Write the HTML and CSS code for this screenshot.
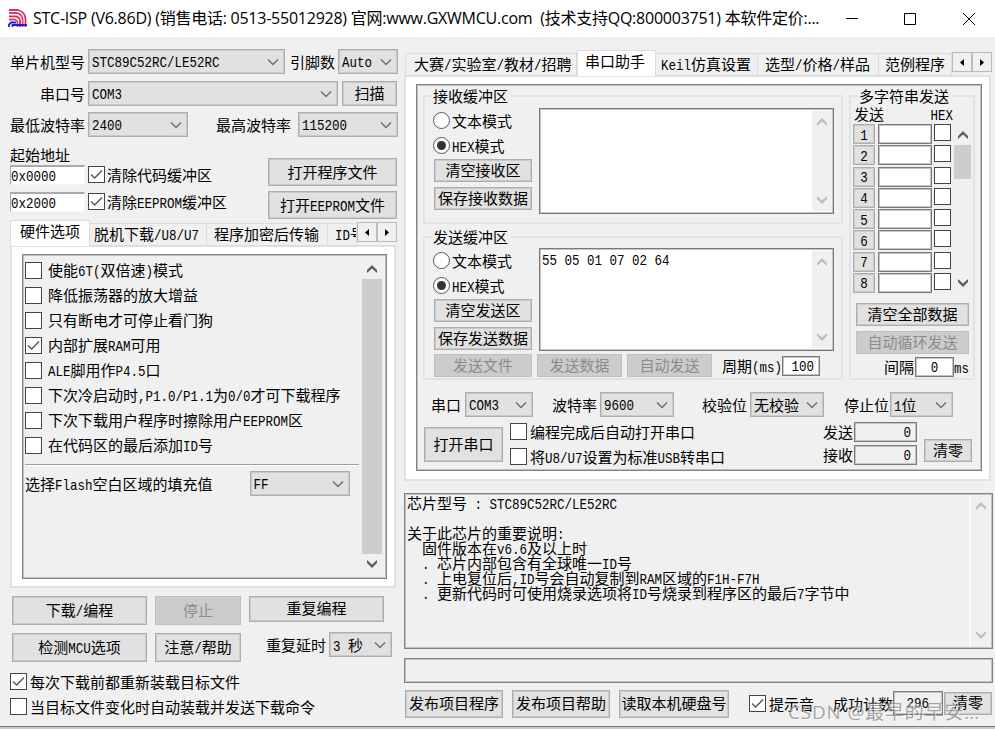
FILE: index.html
```html
<!DOCTYPE html>
<html lang="zh-CN">
<head>
    <meta charset="UTF-8">
    <meta name="viewport" content="width=device-width, initial-scale=1.0">
    <title>STC-ISP (V6.86D)</title>
    <link rel="stylesheet" href="styles.css">
</head>
<body>
    <svg class="sprite">
        <symbol id="down" viewBox="0 0 12 8"><path d="M1 1.5L6 6.5L11 1.5" fill="none" stroke="currentColor" stroke-width="1.5"/></symbol>
        <symbol id="sb-up" viewBox="0 0 10 8"><path d="M0 5L5 0L10 5V8L5 3.4L0 8Z" fill="currentColor"/></symbol>
        <symbol id="sb-down" viewBox="0 0 10 8"><path d="M0 3L5 8L10 3V0L5 4.6L0 0Z" fill="currentColor"/></symbol>
        <symbol id="tick" viewBox="0 0 13 13"><path d="M1 6.5L4.7 10L12 2.6" fill="none" stroke="#555" stroke-width="1.4"/></symbol>
        <symbol id="tri-left" viewBox="0 0 4 7"><path d="M4 0V7L0 3.5Z"/></symbol>
        <symbol id="tri-right" viewBox="0 0 4 7"><path d="M0 0V7L4 3.5Z"/></symbol>
    </svg>
    <div class="window">
        <div class="titlebar">
            <svg class="logo" viewBox="0 0 20 19" fill="none" stroke-width="1.8">
                <path d="M1 1H10Q17 3 17.5 10V18" stroke="#d8325f"/>
                <path d="M1 4H9Q14 5 14.7 11V18" stroke="#e0446c"/>
                <path d="M1 7.3H8Q11.500 8 12 12V18" stroke="#c62d58"/>
                <path d="M1 10.500H7Q9 11 9.500 14V18" stroke="#e0446c"/>
                <path d="M1 18V15.500L3 13.500H8M4.500 18V16H19" stroke="#1522d8"/>
            </svg>
            <div class="title">STC-ISP (V6.86D) (销售电话: 0513-55012928) 官网:www.GXWMCU.com&nbsp; (技术支持QQ:800003751) 本软件定价:...</div>
            <svg class="win-buttons" viewBox="0 0 130 14" fill="none" stroke="#000">
                <path d="M0 6.500H12M58.500 1.500H69.500V12.500H58.500ZM117 1L129 13M129 1L117 13"/>
            </svg>
        </div>
        <div class="main">
            <div class="left">
                <div class="row chip-row">
                    <span class="label wide">单片机型号</span>
                    <div class="select chip"><span class="en">STC89C52RC/LE52RC</span><svg><use href="#down"/></svg></div>
                    <span class="label pins-label">引脚数</span>
                    <div class="select pins"><span class="en">Auto</span><svg><use href="#down"/></svg></div>
                </div>
                <div class="row port-row">
                    <span class="label wide">串口号</span>
                    <div class="select port"><span class="en">COM3</span><svg><use href="#down"/></svg></div>
                    <button class="btn scan">扫描</button>
                </div>
                <div class="row baud-row">
                    <span class="label wide">最低波特率</span>
                    <div class="select baud"><span class="en">2400</span><svg><use href="#down"/></svg></div>
                    <span class="label max-label">最高波特率</span>
                    <div class="select baud"><span class="en">115200</span><svg><use href="#down"/></svg></div>
                </div>
                <div class="address">
                    <div class="address-fields">
                        <div class="address-title">起始地址</div>
                        <div class="row">
                            <div class="addr"><span class="en">0x0000</span></div>
                            <span class="check"><svg><use href="#tick"/></svg></span><span class="label">清除代码缓冲区</span>
                        </div>
                        <div class="row">
                            <div class="addr"><span class="en">0x2000</span></div>
                            <span class="check"><svg><use href="#tick"/></svg></span><span class="label">清除<span class="en">EEPROM</span>缓冲区</span>
                        </div>
                    </div>
                    <div class="address-buttons">
                        <button class="btn">打开程序文件</button>
                        <button class="btn">打开<span class="en">EEPROM</span>文件</button>
                    </div>
                </div>
                <div class="tabs">
                    <div class="tab active hw">硬件选项</div>
                    <div class="tab offline">脱机下载<span class="en">/U8/U7</span></div>
                    <div class="tab encrypt">程序加密后传输</div>
                    <div class="tab idno"><span class="en">ID</span>号</div>
                    <div class="tab-scroll"><span><svg><use href="#tri-left"/></svg></span><span><svg><use href="#tri-right"/></svg></span></div>
                </div>
                <div class="panel options-panel">
                    <div class="box options">
                        <div class="option-list">
                            <div class="option"><span class="check"></span><span>使能<span class="en">6T(</span>双倍速<span class="en">)</span>模式</span></div>
                            <div class="option"><span class="check"></span><span>降低振荡器的放大增益</span></div>
                            <div class="option"><span class="check"></span><span>只有断电才可停止看门狗</span></div>
                            <div class="option"><span class="check"><svg><use href="#tick"/></svg></span><span>内部扩展<span class="en">RAM</span>可用</span></div>
                            <div class="option"><span class="check"></span><span><span class="en">ALE</span>脚用作<span class="en">P4.5</span>口</span></div>
                            <div class="option"><span class="check"></span><span>下次冷启动时<span class="en">,P1.0/P1.1</span>为<span class="en">0/0</span>才可下载程序</span></div>
                            <div class="option"><span class="check"></span><span>下次下载用户程序时擦除用户<span class="en">EEPROM</span>区</span></div>
                            <div class="option"><span class="check"></span><span>在代码区的最后添加<span class="en">ID</span>号</span></div>
                            <div class="fill-row">
                                <span class="label">选择<span class="en">Flash</span>空白区域的填充值</span>
                                <div class="select fill"><span class="en">FF</span><svg><use href="#down"/></svg></div>
                            </div>
                        </div>
                        <div class="scrollbar">
                            <svg><use href="#sb-up"/></svg>
                            <div class="thumb"></div>
                            <svg><use href="#sb-down"/></svg>
                        </div>
                    </div>
                </div>
                <div class="actions">
                    <button class="btn">下载<span class="en">/</span>编程</button>
                    <button class="btn disabled">停止</button>
                    <button class="btn repeat">重复编程</button>
                    <button class="btn">检测<span class="en">MCU</span>选项</button>
                    <button class="btn">注意<span class="en">/</span>帮助</button>
                    <div class="row delay">
                        <span class="label">重复延时</span>
                        <div class="select"><span><span class="en">3 </span>秒</span><svg><use href="#down"/></svg></div>
                    </div>
                </div>
                <div class="row reload"><span class="check"><svg><use href="#tick"/></svg></span>每次下载前都重新装载目标文件</div>
                <div class="row reload"><span class="check"></span>当目标文件变化时自动装载并发送下载命令</div>
            </div>
            <div class="right">
                <div class="tabs">
                    <div class="tab contest">大赛<span class="en">/</span>实验室<span class="en">/</span>教材<span class="en">/</span>招聘</div>
                    <div class="tab active serial">串口助手</div>
                    <div class="tab keil"><span class="en">Keil</span>仿真设置</div>
                    <div class="tab price">选型<span class="en">/</span>价格<span class="en">/</span>样品</div>
                    <div class="tab sample">范例程序</div>
                    <div class="tab-scroll"><span><svg><use href="#tri-left"/></svg></span><span><svg><use href="#tri-right"/></svg></span></div>
                </div>
                <div class="panel serial-panel">
                    <div class="box serial-box">
                        <div class="groups">
                            <div class="buffers">
                                <fieldset class="group receive">
                                    <legend>接收缓冲区</legend>
                                    <div class="buffer">
                                        <div class="modes">
                                            <div class="mode"><span class="radio"></span><span>文本模式</span></div>
                                            <div class="mode"><span class="radio on"></span><span><span class="en">HEX</span>模式</span></div>
                                            <button class="btn">清空接收区</button>
                                            <button class="btn">保存接收数据</button>
                                        </div>
                                        <div class="textarea">
                                            <div class="text"></div>
                                            <div class="scrollbar off"><svg><use href="#sb-up"/></svg><svg><use href="#sb-down"/></svg></div>
                                        </div>
                                    </div>
                                </fieldset>
                                <fieldset class="group send">
                                    <legend>发送缓冲区</legend>
                                    <div class="buffer">
                                        <div class="modes">
                                            <div class="mode"><span class="radio"></span><span>文本模式</span></div>
                                            <div class="mode"><span class="radio on"></span><span><span class="en">HEX</span>模式</span></div>
                                            <button class="btn">清空发送区</button>
                                            <button class="btn">保存发送数据</button>
                                        </div>
                                        <div class="textarea">
                                            <div class="text"><span class="en">55 05 01 07 02 64</span></div>
                                            <div class="scrollbar off"><svg><use href="#sb-up"/></svg><svg><use href="#sb-down"/></svg></div>
                                        </div>
                                    </div>
                                    <div class="send-row">
                                        <button class="btn disabled file">发送文件</button>
                                        <button class="btn disabled">发送数据</button>
                                        <button class="btn disabled">自动发送</button>
                                        <span class="label">周期<span class="en">(ms)</span></span>
                                        <div class="field"><span class="en">100</span></div>
                                    </div>
                                </fieldset>
                            </div>
                            <fieldset class="group multi">
                                <legend>多字符串发送</legend>
                                <div class="multi-head"><span>发送</span><span><span class="en">HEX</span></span></div>
                                <div class="multi-body">
                                    <div class="multi-rows">
                                        <div class="multi-row"><button class="btn"><span class="en">1</span></button><div class="field"></div><span class="check"></span></div>
                                        <div class="multi-row"><button class="btn"><span class="en">2</span></button><div class="field"></div><span class="check"></span></div>
                                        <div class="multi-row"><button class="btn"><span class="en">3</span></button><div class="field"></div><span class="check"></span></div>
                                        <div class="multi-row"><button class="btn"><span class="en">4</span></button><div class="field"></div><span class="check"></span></div>
                                        <div class="multi-row"><button class="btn"><span class="en">5</span></button><div class="field"></div><span class="check"></span></div>
                                        <div class="multi-row"><button class="btn"><span class="en">6</span></button><div class="field"></div><span class="check"></span></div>
                                        <div class="multi-row"><button class="btn"><span class="en">7</span></button><div class="field"></div><span class="check"></span></div>
                                        <div class="multi-row"><button class="btn"><span class="en">8</span></button><div class="field"></div><span class="check"></span></div>
                                    </div>
                                    <div class="scrollbar">
                                        <svg><use href="#sb-up"/></svg>
                                        <div class="thumb"></div>
                                        <svg><use href="#sb-down"/></svg>
                                    </div>
                                </div>
                                <button class="btn wide-btn">清空全部数据</button>
                                <button class="btn wide-btn disabled">自动循环发送</button>
                                <div class="row interval"><span>间隔</span><div class="field"><span class="en">0</span></div><span><span class="en">ms</span></span></div>
                            </fieldset>
                        </div>
                        <div class="row com-row">
                            <span class="label">串口</span>
                            <div class="select com"><span class="en">COM3</span><svg><use href="#down"/></svg></div>
                            <span class="label rate-label">波特率</span>
                            <div class="select rate"><span class="en">9600</span><svg><use href="#down"/></svg></div>
                            <span class="label parity-label">校验位</span>
                            <div class="select rate"><span>无校验</span><svg><use href="#down"/></svg></div>
                            <span class="label stop-label">停止位</span>
                            <div class="select stop"><span><span class="en">1</span>位</span><svg><use href="#down"/></svg></div>
                        </div>
                        <div class="open-row">
                            <button class="btn open">打开串口</button>
                            <div class="open-checks">
                                <div><span class="check"></span><span>编程完成后自动打开串口</span></div>
                                <div><span class="check"></span><span>将<span class="en">U8/U7</span>设置为标准<span class="en">USB</span>转串口</span></div>
                            </div>
                            <div class="counts">
                                <div><span>发送</span><div class="field"><span class="en">0</span></div></div>
                                <div><span>接收</span><div class="field"><span class="en">0</span></div></div>
                            </div>
                            <button class="btn clear">清零</button>
                        </div>
                    </div>
                </div>
                <div class="box info">
                    <div class="info-text">芯片型号<span class="en"> : STC89C52RC/LE52RC</span>

关于此芯片的重要说明<span class="en">:</span>
<span class="en">  </span>固件版本在<span class="en">v6.6</span>及以上时
<span class="en">  . </span>芯片内部包含有全球唯一<span class="en">ID</span>号
<span class="en">  . </span>上电复位后<span class="en">,ID</span>号会自动复制到<span class="en">RAM</span>区域的<span class="en">F1H-F7H</span>
<span class="en">  . </span>更新代码时可使用烧录选项将<span class="en">ID</span>号烧录到程序区的最后<span class="en">7</span>字节中</div>
                    <div class="scrollbar off"><svg><use href="#sb-up"/></svg><svg><use href="#sb-down"/></svg></div>
                </div>
                <div class="box progress"></div>
                <div class="footer">
                    <button class="btn">发布项目程序</button>
                    <button class="btn">发布项目帮助</button>
                    <button class="btn disk">读取本机硬盘号</button>
                    <span class="check"><svg><use href="#tick"/></svg></span>
                    <span class="beep">提示音</span>
                    <span class="success">成功计数</span>
                    <div class="field"><span class="en">296</span></div>
                    <button class="btn reset">清零</button>
                </div>
            </div>
        </div>
        <div class="watermark">CSDN @最早的早安…</div>
    </div>
</body>
</html>
```
FILE: styles.css
```css
* {
    box-sizing: border-box;
}
body {
    margin: 0;
    background-color: #f0f0f0;
    color: #000;
    font-family: "Noto Sans CJK SC", sans-serif;
    font-size: 15px;
    line-height: 16px;
    white-space: nowrap;
    overflow: hidden;
}
svg {
    display: block;
    flex: none;
}
.sprite {
    display: none;
}
/* half-width latin, as tall as the 15px full-width characters beside it */
.en {
    display: inline-block;
    font-family: "Liberation Mono", monospace;
    font-size: 12.5px;
    line-height: 0;
    white-space: pre;
    transform: scaleY(1.2);
    transform-origin: 0 3px;
}
.window {
    position: relative;
    width: 995px;
    height: 729px;
    border-bottom: 2px solid #cacccb;
}
.titlebar {
    display: flex;
    align-items: center;
    height: 37px;
    padding-left: 8px;
    background-color: #fff;
}
.logo {
    width: 20px;
    height: 19px;
}
.title {
    width: 813px;
    margin-left: 5px;
    padding-bottom: 2px;
    font-family: "Open Sans", "Noto Sans CJK SC", sans-serif;
    font-size: 16px;
    line-height: 20px;
    letter-spacing: -0.24px;
}
.win-buttons {
    width: 130px;
    height: 14px;
}
.main {
    display: flex;
    height: 690px;
    border-bottom: 1px solid #777;
}
.left {
    width: 400px;
    padding-top: 12px;
}
.right {
    width: 595px;
    padding-top: 13px;
}
.row {
    display: flex;
    align-items: center;
}

/* controls */
.btn {
    flex: none;
    display: block;
    padding: 0 0 1px;
    border: 1px solid #adadad;
    background-color: #e1e1e1;
    box-shadow: inset 0 0 0 1px #cacaca;
    color: #000;
    font-family: "Noto Sans CJK SC", sans-serif;
    font-size: 15px;
    line-height: 16px;
    text-align: center;
    white-space: nowrap;
}
.btn.disabled {
    border-color: #bfbfbf;
    background-color: #ccc;
    box-shadow: none;
    color: #8b8b8b;
}
.select {
    flex: none;
    display: flex;
    align-items: center;
    justify-content: space-between;
    height: 25px;
    padding: 0 5px 0 3px;
    border: 1px solid #adadad;
    background-color: #e1e1e1;
    box-shadow: inset 0 0 0 1px #cacaca;
}
.select > .en {
    padding-top: 4px;
    transform-origin: 0 7px;
}
.select svg {
    width: 12px;
    height: 8px;
    color: #707070;
}
.check {
    flex: none;
    display: flex;
    align-items: center;
    justify-content: center;
    width: 17px;
    height: 17px;
    border: 1.5px solid #444;
    background-color: #fff;
}
.check svg {
    width: 13px;
    height: 13px;
}
.radio {
    flex: none;
    display: flex;
    align-items: center;
    justify-content: center;
    width: 17px;
    height: 17px;
    border: 1.5px solid #555;
    border-radius: 50%;
    background-color: #fff;
}
.radio.on::after {
    content: "";
    width: 9px;
    height: 9px;
    border-radius: 50%;
    background-color: #333;
}
.field {
    flex: none;
    border: 1px solid #7a7a7a;
    background-color: #fff;
    box-shadow: inset 0 0 0 1px #c4c4c4;
    text-align: right;
}
.scrollbar {
    flex: none;
    display: flex;
    flex-direction: column;
    align-items: center;
    justify-content: space-between;
    width: 20px;
    padding: 7px 0;
    background-color: #f0f0f0;
}
.scrollbar svg {
    width: 10px;
    height: 8px;
    color: #606060;
}
.scrollbar.off svg {
    color: #bfbfbf;
}
.thumb {
    width: 100%;
    background-color: #cdcdcd;
}
.box {
    border: 1px solid #828282;
    background-color: #f0f0f0;
    box-shadow: inset 0 0 0 1px #c0c0c0;
}
.panel {
    margin-top: -1px;
    border: 2px solid #e1e1e1;
    background-color: #fff;
}

/* tabs */
.tabs {
    display: flex;
    align-items: flex-end;
    height: 26px;
}
.tab {
    height: 23px;
    padding: 2px 0 0 4px;
    border: 1px solid #dcdcdc;
    border-left: 0;
    background-color: #f0f0f0;
    overflow: hidden;
}
.tab.active {
    position: relative;
    height: 26px;
    padding-top: 2px;
    border-left: 1px solid #dcdcdc;
    border-bottom: 0;
    background-color: #fff;
}
.tab-scroll {
    display: flex;
    align-self: flex-start;
    margin-top: 2px;
}
.tab-scroll span {
    display: flex;
    align-items: center;
    justify-content: center;
    width: 20px;
    height: 20px;
    border: 1.5px solid #bbb;
    background-color: #f0f0f0;
}
.tab-scroll svg {
    width: 4px;
    height: 7px;
}

/* left column */
.wide {
    width: 88px;
    padding-right: 3px;
    text-align: right;
}
.chip {
    width: 197px;
}
.pins-label {
    width: 53px;
    padding-left: 5px;
}
.pins {
    width: 60px;
}
.port-row {
    margin-top: 7px;
}
.port {
    width: 250px;
}
.scan {
    width: 55px;
    height: 25px;
    margin-left: 4px;
}
.baud-row {
    margin-top: 6px;
}
.baud {
    width: 100px;
}
.max-label {
    width: 110px;
    padding-left: 28px;
}
.address {
    display: flex;
    justify-content: space-between;
    height: 81px;
    padding: 10px 3px 0 10px;
}
.address-title {
    height: 18px;
}
.address-fields .row {
    height: 20px;
    margin-bottom: 7px;
}
.address-fields .check {
    margin-bottom: 2px;
}
.address-fields .label {
    margin: 0 0 1px 2px;
}
.addr {
    width: 75px;
    height: 20px;
    margin-right: 3px;
    border: 1px solid #f6f6f6;
    border-top: 2px solid #aaa;
    border-left: 1px solid #aaa;
    background-color: #fff;
    line-height: 15px;
}
.address-buttons .btn {
    width: 129px;
    height: 28px;
}
.address-buttons .btn:first-child {
    margin: 11px 0 5px;
}
.left .tabs {
    margin: 2px 0 0 10px;
}
.hw {
    width: 80px;
    padding-left: 9px;
}
.offline {
    width: 117px;
}
.encrypt {
    width: 121px;
    padding-left: 7px;
}
.idno {
    width: 29px;
    padding-left: 7px;
}
.options-panel {
    width: 386px;
    height: 343px;
    margin-left: 10px;
    padding: 7px 0 0 10px;
}
.options {
    display: flex;
    width: 365px;
    height: 325px;
    padding: 3px;
}
.option-list {
    width: 336px;
    margin-left: -1px;
}
.option-list + .scrollbar {
    margin-left: 1px;
}
.option {
    display: flex;
    align-items: center;
    height: 25px;
    padding-bottom: 1px;
}
.option .check {
    margin-right: 6px;
}
.fill-row {
    display: flex;
    align-items: center;
    width: 334px;
    height: 38px;
    margin-top: 6px;
    border-top: 1px solid #a0a0a0;
    box-shadow: inset 0 1px 0 #fff;
}
.fill {
    width: 100px;
    margin-left: 37px;
}
.options .scrollbar .thumb {
    height: 275px;
}
.actions {
    display: grid;
    grid-template-columns: 135px 86px 143px;
    grid-template-rows: 29px 29px;
    gap: 8px;
    margin: 8px 0 0 12px;
}
.actions .btn {
    padding-bottom: 2px;
}
.actions .repeat {
    width: 135px;
    height: 26px;
}
.delay {
    height: 25px;
    margin-top: -1px;
}
.delay .label {
    width: 80px;
    padding-left: 17px;
}
.delay .select {
    width: 63px;
}
.reload {
    height: 17px;
    margin: 11px 0 0 10px;
}
.reload + .reload {
    margin-top: 8px;
}
.reload .check {
    margin-right: 3px;
}

/* serial assistant */
.right .tabs {
    margin-left: 5px;
}
.contest {
    width: 172px;
    padding-left: 8px;
    border-left: 1px solid #dcdcdc;
}
.serial {
    width: 79px;
    padding-left: 7px;
}
.keil {
    width: 102px;
    padding-left: 5px;
}
.price {
    width: 121px;
    padding-left: 7px;
}
.sample {
    width: 73px;
    padding-left: 6px;
}
.serial-panel {
    width: 587px;
    height: 406px;
    margin-left: 4px;
    padding: 7px 0 0 10px;
}
.serial-box {
    width: 566px;
    height: 387px;
    padding: 3px 0 0 6px;
}
.groups {
    display: flex;
}
.buffers {
    width: 420px;
    margin-right: 6px;
}
.group {
    min-width: 0;
    margin: 0;
    padding: 0;
    border: 2px solid #e3e3e3;
}
.group legend {
    height: 16px;
    margin-left: 7px;
    padding: 0 3px 0 1px;
}
.receive {
    height: 136px;
    margin-bottom: 5px;
}
.send {
    height: 151px;
}
.buffer {
    display: flex;
}
.modes {
    width: 114px;
    padding: 8px 0 0 8px;
}
.send .modes {
    padding-top: 7px;
}
.mode {
    display: flex;
    align-items: center;
    height: 17px;
    margin-bottom: 8px;
}
.mode .radio {
    margin-right: 2px;
}
.modes .btn {
    width: 98px;
    height: 23px;
    margin: 0 0 5px 1px;
}
.mode + .btn {
    margin-top: -3px;
}
.textarea {
    display: flex;
    width: 295px;
    height: 106px;
    margin-top: 4px;
    padding: 1px;
    border: 1px solid #7a7a7a;
    background-color: #fff;
    box-shadow: inset 0 0 0 1px #c4c4c4;
}
.send .textarea {
    height: 103px;
    margin-top: 3px;
}
.text {
    width: 271px;
    padding: 1px;
}
.textarea .scrollbar {
    margin: 1px 0;
}
.send-row {
    display: flex;
    align-items: center;
    margin: -1px 0 0 9px;
}
.send-row .btn {
    width: 85px;
    height: 23px;
    margin-right: 5px;
}
.send-row .file {
    width: 98px;
}
.send-row .label {
    width: 65px;
    padding-left: 5px;
}
.send-row .field {
    width: 38px;
    height: 20px;
    padding-right: 5px;
}
.multi {
    width: 126px;
    height: 292px;
}
.multi-head {
    display: flex;
    justify-content: space-between;
    height: 20px;
    padding: 2px 20px 0 3px;
}
.multi-body {
    display: flex;
    height: 170px;
    padding-left: 2px;
}
.multi-rows {
    display: grid;
    grid-template-rows: repeat(8, 1fr);
    width: 99px;
}
.multi-row {
    display: flex;
}
.multi-row .btn {
    width: 22px;
    height: 20px;
}
.multi-row .field {
    width: 54px;
    height: 20px;
    margin: 0 2px 0 3px;
}
.multi-body .scrollbar {
    width: 17px;
    margin-left: 2px;
}
.multi-body .thumb {
    height: 34px;
    margin-top: -94px;
}
.wide-btn {
    width: 113px;
    height: 23px;
    margin: 9px 0 0 5px;
}
.wide-btn + .wide-btn {
    margin-top: 5px;
}
.interval {
    height: 20px;
    margin-top: 3px;
    padding-left: 33px;
}
.interval .field {
    width: 39px;
    height: 20px;
    margin-left: 1px;
    text-align: center;
}
.com-row {
    margin: 12px 0 0 8px;
}
.com-row .label {
    width: 34px;
}
.com {
    width: 68px;
}
.rate {
    width: 74px;
}
.com-row .rate-label {
    width: 67px;
    padding-left: 19px;
}
.com-row .parity-label {
    width: 76px;
    padding-left: 28px;
}
.com-row .stop-label {
    width: 66px;
    padding-left: 20px;
}
.stop {
    width: 63px;
}
.open-row {
    display: flex;
    padding: 5px 0 0 1px;
}
.open {
    width: 79px;
    height: 35px;
    margin-top: 5px;
}
.open-checks {
    width: 320px;
    padding: 1px 0 0 7px;
}
.open-checks div {
    display: flex;
    align-items: center;
    height: 17px;
    margin-bottom: 8px;
}
.open-checks .check {
    margin-right: 3px;
}
.counts > div {
    display: flex;
    align-items: center;
    height: 20px;
    margin-bottom: 3px;
}
.counts .field {
    width: 63px;
    height: 20px;
    margin-left: 1px;
    padding-right: 5px;
    background-color: #f0f0f0;
}
.clear {
    width: 48px;
    height: 23px;
    margin: 17px 0 0 7px;
}

/* chip notes and footer */
.info {
    display: flex;
    justify-content: space-between;
    width: 589px;
    height: 156px;
    margin: 12px 0 0 4px;
    padding: 1px;
}
.info-text {
    padding-left: 1px;
    line-height: 15px;
    white-space: pre;
}
.info .scrollbar {
    width: 22px;
    border-left: 2px solid #fafafa;
    padding: 7px 0 8px;
}
.progress {
    width: 589px;
    height: 25px;
    margin: 9px 0 0 4px;
}
.footer {
    display: flex;
    align-items: center;
    height: 28px;
    margin: 7px 0 0 5px;
}
.footer .btn {
    width: 98px;
    height: 28px;
    margin-right: 9px;
    padding-bottom: 2px;
}
.footer .disk {
    width: 110px;
    margin-right: 20px;
}
.footer .check {
    margin-bottom: 2px;
}
.beep {
    width: 67px;
    padding-left: 3px;
}
.success {
    width: 60px;
}
.footer .field {
    width: 50px;
    height: 24px;
    padding: 2px 13px 0 0;
    margin-bottom: 3px;
    background-color: #f0f0f0;
}
.footer .reset {
    width: 48px;
    height: 23px;
    margin: 0 0 2px 1px;
}
.watermark {
    position: absolute;
    left: 788px;
    top: 701px;
    color: rgba(130, 130, 130, 0.7);
    font-family: "Open Sans", "Noto Sans CJK SC", sans-serif;
    font-size: 19px;
    line-height: 22px;
    letter-spacing: 0.8px;
    text-shadow: 1px 1px 0 rgba(255, 255, 255, 0.6);
}
```
